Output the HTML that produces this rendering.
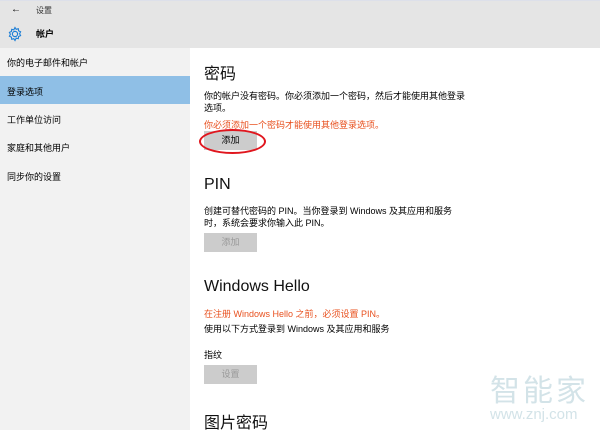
<!DOCTYPE html>
<html><head><meta charset="utf-8"><style>
body{margin:0;width:600px;height:430px;overflow:hidden;background:#fff;font-family:"Liberation Sans","Noto Sans CJK SC",sans-serif;position:relative;color:#000}
.a{position:absolute;white-space:nowrap}
.s{font-size:9px}
.t{font-size:16px;color:#111}
.btn{position:absolute;left:204px;width:53px;height:19px;background:#ccc;font-size:9px;color:#999;text-align:center;line-height:19px}
</style></head><body>
<div class="a" style="left:0;top:0;width:600px;height:1px;background:#dde0ea"></div>
<div class="a" style="left:0;top:1px;width:600px;height:47px;background:#e5e5e5"></div>
<div class="a" style="left:0;top:48px;width:190px;height:382px;background:#f2f2f2"></div>
<div class="a" style="left:0;top:76px;width:190px;height:28px;background:#8fbfe6"></div>
<div class="a s" style="left:11px;top:4px;font-size:10px">←</div>
<div class="a" style="left:36px;top:5px;font-size:8px;color:#333">设置</div>
<svg class="a" style="left:7px;top:26px" width="16" height="16" viewBox="0 0 16 16"><circle cx="8" cy="8" r="2.6" fill="none" stroke="#1e7fd6" stroke-width="1.2"/><path d="M8 1.5l1.2 1.8 2.1-.6.3 2.2 2 .9-1 1.9 1 1.9-2 .9-.3 2.2-2.1-.6L8 14.5l-1.2-1.8-2.1.6-.3-2.2-2-.9 1-1.9-1-1.9 2-.9.3-2.2 2.1.6z" fill="none" stroke="#1e7fd6" stroke-width="1.1"/></svg>
<div class="a" style="left:36px;top:27px;font-size:9px;font-weight:bold">帐户</div>
<div class="a s" style="left:7px;top:56px">你的电子邮件和帐户</div>
<div class="a s" style="left:7px;top:85px">登录选项</div>
<div class="a s" style="left:7px;top:113px">工作单位访问</div>
<div class="a s" style="left:7px;top:141px">家庭和其他用户</div>
<div class="a s" style="left:7px;top:170px">同步你的设置</div>
<div class="a t" style="left:204px;top:60px">密码</div>
<div class="a s" style="left:204px;top:90px;line-height:12px">你的帐户没有密码。你必须添加一个密码，然后才能使用其他登录<br>选项。</div>
<div class="a s" style="left:204px;top:118px;color:#e8501e">你必须添加一个密码才能使用其他登录选项。</div>
<div class="btn" style="top:131px;color:#000">添加</div>
<div class="a" style="left:199px;top:129px;width:63px;height:21px;border:2px solid #e0161e;border-radius:50%"></div>
<div class="a t" style="left:204px;top:176px">PIN</div>
<div class="a s" style="left:204px;top:205px;line-height:12px">创建可替代密码的 PIN。当你登录到 Windows 及其应用和服务<br>时，系统会要求你输入此 PIN。</div>
<div class="btn" style="top:233px">添加</div>
<div class="a t" style="left:204px;top:278px">Windows Hello</div>
<div class="a s" style="left:204px;top:307px;color:#e8501e">在注册 Windows Hello 之前，必须设置 PIN。</div>
<div class="a s" style="left:204px;top:322px">使用以下方式登录到 Windows 及其应用和服务</div>
<div class="a s" style="left:204px;top:348px">指纹</div>
<div class="btn" style="top:365px">设置</div>
<div class="a t" style="left:204px;top:409px">图片密码</div>
<div class="a" style="left:490px;top:366px;font-size:30px;color:#d3e3e8;letter-spacing:3px">智能家</div>
<div class="a" style="left:490px;top:406px;font-size:15px;color:#d3e3e8">www.znj.com</div>
</body></html>
